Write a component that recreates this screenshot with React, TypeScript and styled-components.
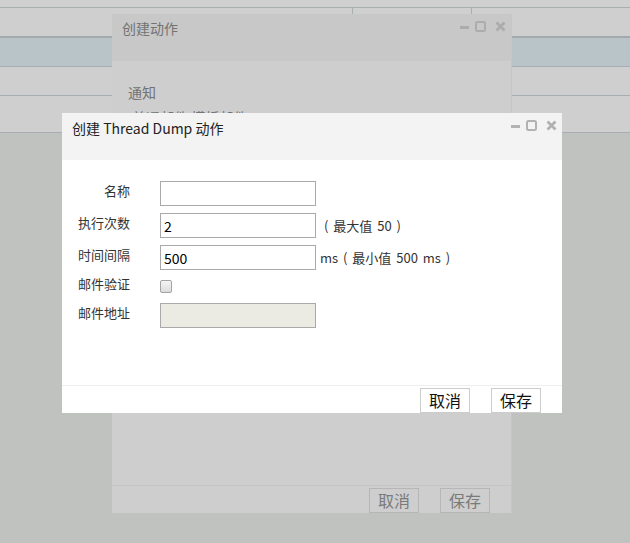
import React from "react";
import styled, { createGlobalStyle, css } from "styled-components";

const Global = createGlobalStyle`
  html, body { margin: 0; padding: 0; }
  body {
    background: #c0c2c0;
    font-family: "Noto Sans CJK SC", "Noto Sans", sans-serif;
  }
  * { box-sizing: border-box; }
`;

const Page = styled.div`
  position: relative;
  width: 630px;
  height: 543px;
  overflow: hidden;
  background: #c0c2c0;
`;

/* ---------- background page (dimmed) ---------- */
const TopStrip = styled.div`
  height: 8px;
  background: #d0d0d0;
  border-bottom: 1px solid #a8b0b2;
`;

const Toolbar = styled.div`
  display: flex;
  height: 30px;
  background: #cfcfcf;
  border-bottom: 2px solid #a2aaae;
`;

const ToolCell = styled.div<{ $w?: number }>`
  ${(p) => (p.$w ? `width: ${p.$w}px;` : "flex: 1;")}
  border-left: 1px solid #a8b0b2;
  &:first-child { border-left: none; }
`;

const GridRow = styled.div<{ $h: number; $blue?: boolean }>`
  height: ${(p) => p.$h}px;
  background: ${(p) => (p.$blue ? "#b8c4c8" : "#cfcfcf")};
  border-bottom: 1px solid #a6aeb1;
`;

/* ---------- dialog windows ---------- */
const Window = styled.div<{ $dim?: boolean; $x: number; $y: number; $w: number; $h: number }>`
  position: absolute;
  left: ${(p) => p.$x}px;
  top: ${(p) => p.$y}px;
  width: ${(p) => p.$w}px;
  height: ${(p) => p.$h}px;
  display: flex;
  flex-direction: column;
  background: ${(p) => (p.$dim ? "#cecece" : "#ffffff")};
  ${(p) => p.$dim && css`border-right: 1px solid #c6c6c6;`}
`;

const TitleBar = styled.div<{ $dim?: boolean }>`
  height: 47px;
  flex: none;
  display: flex;
  align-items: flex-start;
  justify-content: space-between;
  padding: ${(p) => (p.$dim ? "5px" : "6px")} 5px 0 10px;
  background: ${(p) => (p.$dim ? "#c8c8c8" : "#f3f3f3")};
`;

const Title = styled.div<{ $dim?: boolean }>`
  font-size: 14px;
  line-height: 19px;
  color: ${(p) => (p.$dim ? "#737373" : "#222222")};
`;

const Tools = styled.div<{ $dim?: boolean }>`
  display: flex;
  align-items: center;
  gap: 6px;
  padding-top: ${(p) => (p.$dim ? "2px" : "1px")};
  color: ${(p) => (p.$dim ? "#acacac" : "#b2b2b2")};
  svg { display: block; }
`;

const Body = styled.div`
  flex: 1;
  display: flex;
  flex-direction: column;
`;

const Footer = styled.div<{ $dim?: boolean }>`
  flex: none;
  height: 28px;
  border-top: 1px solid ${(p) => (p.$dim ? "#c5c5c5" : "#eeeeee")};
  display: flex;
  justify-content: flex-end;
  align-items: flex-end;
  gap: 21px;
  padding-right: 21px;
`;

const Button = styled.button<{ $dim?: boolean }>`
  width: 50px;
  height: 25px;
  padding: 0;
  font-family: inherit;
  font-size: 16px;
  line-height: 23px;
  background: ${(p) => (p.$dim ? "#cecece" : "#ffffff")};
  color: ${(p) => (p.$dim ? "#7a7a7a" : "#111111")};
  border: 1px solid ${(p) => (p.$dim ? "#b6b6b6" : "#cccccc")};
  border-radius: 0;
`;

/* back dialog content */
const BackBody = styled(Body)`
  padding: 21px 0 0 16px;
  font-size: 14px;
  line-height: 20px;
  color: #727272;
  gap: 5px;
`;

const Sub = styled.div`
  padding-left: 4px;
`;

/* front form */
const Form = styled(Body)`
  padding-top: 21px;
  gap: 7px;
`;

const Row = styled.div<{ $h?: number }>`
  display: flex;
  align-items: center;
  height: ${(p) => p.$h ?? 25}px;
`;

const Label = styled.label`
  width: 68px;
  margin-right: 30px;
  text-align: right;
  font-size: 13px;
  line-height: 18px;
  color: #333333;
  padding-bottom: 5px;
`;

const Input = styled.input<{ $disabled?: boolean }>`
  width: 156px;
  height: 25px;
  border: 1px solid #a9a9a9;
  padding: 0 3px;
  font-family: inherit;
  font-size: 14px;
  color: #000;
  background: ${(p) => (p.$disabled ? "#ebebe4" : "#ffffff")};
  outline: none;
`;

const Hint = styled.span<{ $gap: number }>`
  margin-left: ${(p) => p.$gap}px;
  font-size: 13px;
  color: #333333;
  white-space: pre;
  word-spacing: 2px;
`;

const Check = styled.span`
  width: 12px;
  height: 13px;
  margin-bottom: 1px;
  border: 1px solid #a3a3a3;
  border-radius: 2px;
  background: linear-gradient(#f4f4f4, #dcdcdc);
`;

function WinTools({ dim }: { dim?: boolean }) {
  return (
    <Tools $dim={dim}>
      <svg width="9" height="10" viewBox="0 0 9 10">
        <rect x="0" y="4" width="9" height="3" fill="currentColor" />
      </svg>
      <svg width="11" height="11" viewBox="0 0 11 11" style={{ marginRight: 3 }}>
        <rect x="1" y="1" width="9" height="9" rx="1.5" fill="none" stroke="currentColor" strokeWidth="2" />
      </svg>
      <svg width="11" height="11" viewBox="0 0 11 11">
        <path d="M1.5 1.5 L9.5 9.5 M9.5 1.5 L1.5 9.5" stroke="currentColor" strokeWidth="2.8" strokeLinecap="butt" />
      </svg>
    </Tools>
  );
}

export default function App() {
  return (
    <Page>
      <Global />
      <TopStrip />
      <Toolbar>
        <ToolCell $w={352} />
        <ToolCell $w={119} />
        <ToolCell />
      </Toolbar>
      <GridRow $h={29} $blue />
      <GridRow $h={29} />
      <GridRow $h={37} />

      <Window $dim $x={112} $y={14} $w={400} $h={499}>
        <TitleBar $dim>
          <Title $dim>创建动作</Title>
          <WinTools dim />
        </TitleBar>
        <BackBody>
          <div>通知</div>
          <Sub>普通邮件 模板邮件</Sub>
        </BackBody>
        <Footer $dim>
          <Button $dim>取消</Button>
          <Button $dim>保存</Button>
        </Footer>
      </Window>

      <Window $x={62} $y={113} $w={500} $h={300}>
        <TitleBar>
          <Title>创建 Thread Dump 动作</Title>
          <WinTools />
        </TitleBar>
        <Form>
          <Row>
            <Label>名称</Label>
            <Input defaultValue="" />
          </Row>
          <Row>
            <Label>执行次数</Label>
            <Input defaultValue="2" />
            <Hint $gap={8}>( 最大值 50 )</Hint>
          </Row>
          <Row>
            <Label>时间间隔</Label>
            <Input defaultValue="500" />
            <Hint $gap={4}>ms ( 最小值 500 ms )</Hint>
          </Row>
          <Row $h={19}>
            <Label>邮件验证</Label>
            <Check />
          </Row>
          <Row>
            <Label>邮件地址</Label>
            <Input $disabled disabled defaultValue="" />
          </Row>
        </Form>
        <Footer>
          <Button>取消</Button>
          <Button>保存</Button>
        </Footer>
      </Window>
    </Page>
  );
}
